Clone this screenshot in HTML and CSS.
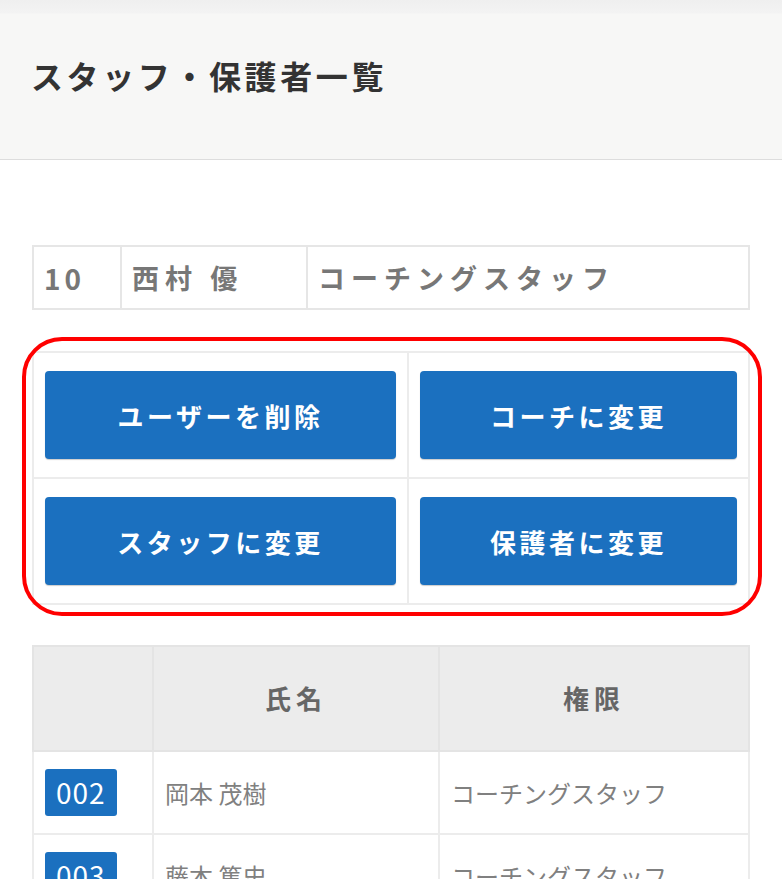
FILE: index.html
```html
<!DOCTYPE html>
<html lang="ja">
<head>
    <meta charset="UTF-8">
    <meta name="viewport" content="width=device-width, initial-scale=1.0">
    <title>スタッフ・保護者一覧</title>
    <link rel="stylesheet" href="styles.css">
</head>
<body>
    <div class="page-head">
        <h1>スタッフ・保護者一覧</h1>
    </div>
    <div class="content">
        <table class="info">
            <colgroup>
                <col class="info-no">
                <col class="info-name">
                <col>
            </colgroup>
            <tr>
                <td class="num">10</td>
                <td>西村 優</td>
                <td>コーチングスタッフ</td>
            </tr>
        </table>

        <div class="actions">
            <table class="action-table">
                <colgroup>
                    <col class="col-left">
                    <col>
                </colgroup>
                <tr>
                    <td><button>ユーザーを削除</button></td>
                    <td><button>コーチに変更</button></td>
                </tr>
                <tr>
                    <td><button>スタッフに変更</button></td>
                    <td><button>保護者に変更</button></td>
                </tr>
            </table>
        </div>

        <table class="list">
            <colgroup>
                <col class="col-no">
                <col class="col-name">
                <col>
            </colgroup>
            <tr>
                <th></th>
                <th>氏名</th>
                <th>権限</th>
            </tr>
            <tr>
                <td><span class="badge">002</span></td>
                <td>岡本 茂樹</td>
                <td>コーチングスタッフ</td>
            </tr>
            <tr>
                <td><span class="badge">003</span></td>
                <td>藤本 篤史</td>
                <td>コーチングスタッフ</td>
            </tr>
        </table>
    </div>
</body>
</html>
```

FILE: styles.css
```css
body{
    margin: 0;
    font-family: "Noto Sans CJK JP", "Noto Sans", sans-serif;
    background: #ffffff;
    color: #333333;
}

.page-head{
    height: 160px;
    box-sizing: border-box;
    display: flex;
    align-items: center;
    padding: 0 31px;
    background: linear-gradient(#efefef 0, #f3f3f3 13px, #f7f7f6 14px);
    border-bottom: 1px solid #dddddd;
}

.page-head h1{
    margin: 0 0 10px;
    font-size: 32px;
    font-weight: bold;
    letter-spacing: 3.6px;
    color: #333333;
}

.content{
    padding: 85px 32px 0;
}

table{
    width: 100%;
    border-collapse: collapse;
    table-layout: fixed;
}

.info td{
    border: 2px solid #e6e6e6;
    height: 61px;
    padding: 0 10px;
    font-size: 27px;
    font-weight: bold;
    letter-spacing: 6px;
    color: #777777;
}

.info .num{
    font-size: 28px;
    letter-spacing: 4px;
}

col.info-no{
    width: 88px;
}

col.info-name{
    width: 186px;
}

.actions{
    position: relative;
    margin-top: 41px;
}

.actions::after{
    content: '';
    position: absolute;
    left: -10px;
    right: -12px;
    top: -14px;
    bottom: -11px;
    border: 4px solid #ff0000;
    border-radius: 40px;
    pointer-events: none;
}

.action-table td{
    border: 2px solid #ececec;
    padding: 18px 11px;
}

col.col-left{
    width: 375px;
}

button{
    display: block;
    width: 100%;
    height: 88px;
    border: none;
    border-radius: 4px;
    background: #1b70bf;
    color: #ffffff;
    font-family: inherit;
    font-size: 26px;
    font-weight: bold;
    letter-spacing: 3.5px;
    box-shadow: 0 1px 1px rgba(0, 0, 0, 0.2);
}

.list{
    margin-top: 40px;
}

.list th{
    height: 100px;
    padding: 0 0 3px;
    background: #ececec;
    border: 2px solid #e4e4e4;
    font-size: 26px;
    font-weight: bold;
    letter-spacing: 5px;
    color: #666666;
}

col.col-no{
    width: 120px;
}

col.col-name{
    width: 286px;
}

.list td{
    height: 81px;
    border: 2px solid #ececec;
    padding: 0 11px;
    font-size: 24px;
    color: #808080;
}

.badge{
    display: inline-block;
    background: #1b70bf;
    color: #ffffff;
    border-radius: 3px;
    padding: 6px 11px;
    font-size: 28px;
    line-height: 35px;
    letter-spacing: 1px;
}
```
